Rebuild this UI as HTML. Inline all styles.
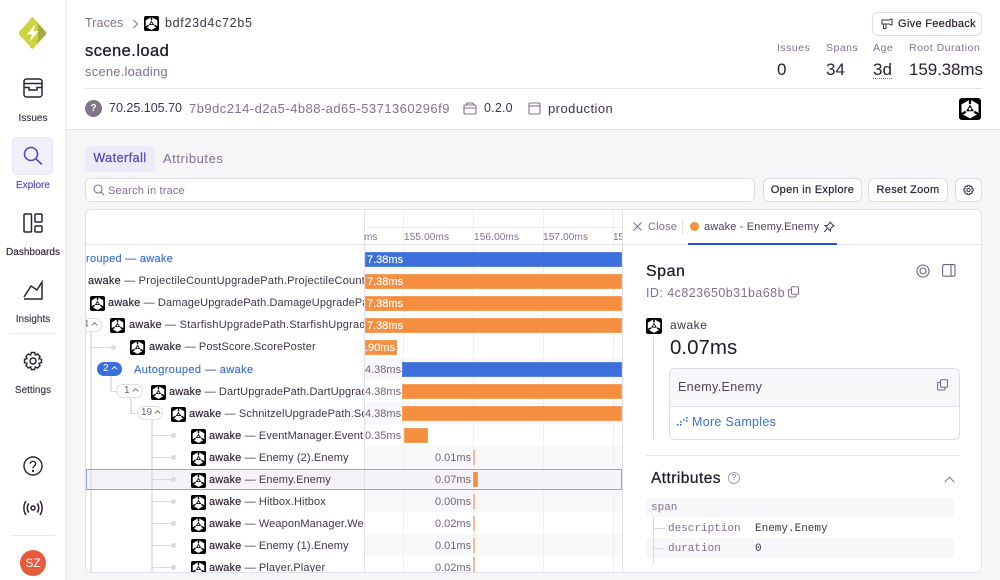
<!DOCTYPE html>
<html><head><meta charset="utf-8"><style>
*{box-sizing:border-box}
html,body{margin:0;padding:0}
body{width:1000px;height:580px;overflow:hidden;position:relative;background:#fff;font-family:"Liberation Sans",sans-serif;color:#2b2233}
.a{position:absolute;white-space:nowrap}
.g{color:#80708f}
.nav{position:absolute;left:0;width:66px;text-align:center;font-size:10px;color:#3e3446;-webkit-text-stroke:.15px}
.btn{position:absolute;background:#fff;border:1px solid #e0dce5;border-radius:6px;font-size:11px;color:#2b2233;text-align:center;letter-spacing:.3px;line-height:22px;-webkit-text-stroke:.2px}
.bar{position:absolute;height:15px;color:#fff;font-size:11px;line-height:16px;padding-left:2px;overflow:hidden;-webkit-text-stroke:.15px;box-shadow:inset 0 0 0 1px rgba(255,255,255,.14)}
.o{background:#f58f3f}.b{background:#3a6fdc}
.t{position:absolute;font-size:11px;color:#6f6379;white-space:nowrap;margin-top:2px}
.row{position:absolute;left:86px;width:278px;height:22px;overflow:hidden}
.n{position:absolute;top:5px;font-size:11px;line-height:14px;white-space:nowrap;color:#3e3446;letter-spacing:.12px}
.n b{font-weight:normal;color:#2b2233;-webkit-text-stroke:.15px}
.u{position:absolute;width:15px;height:15px;margin-top:1px}
.s{position:absolute;left:365px;width:257px;height:22px;background:#f8f7fa}
.tick{position:absolute;width:2px;height:15px;background:#f9b98a;margin-left:-.5px}
.hl{position:absolute;background:#dcd9e3}
.v{position:absolute;width:2px;background:#e4e2ea}
.dot{position:absolute;width:5px;height:5px;border-radius:50%;background:#dcd9e3}
.pill{position:absolute;height:14px;border:1px solid #e0dce5;border-radius:7px;background:#fff;font-size:10px;line-height:12px;color:#6f6379;padding-left:5px;white-space:nowrap}
.pill svg{margin-left:2px;vertical-align:1px}
.lab{position:absolute;font-size:10.5px;color:#80708f;letter-spacing:.5px;white-space:nowrap}
.val{position:absolute;font-size:17px;color:#2b2233;white-space:nowrap}
.m{font-family:"Liberation Mono",monospace;font-size:11px;position:absolute;white-space:nowrap}
</style></head><body>
<svg width="0" height="0" style="position:absolute"><defs>
<symbol id="un" viewBox="0 0 15 15"><rect width="15" height="15" rx="2" fill="#000"/><path d="M7.5 1.4L13 4.5V10.5L7.5 13.6L2 10.5V4.5Z" fill="#fff" stroke="#fff" stroke-linejoin="round" stroke-width=".6"/><path d="M7.5 1V4.2M1.8 11L4.6 9.3M13.2 11L10.4 9.3" stroke="#000" stroke-width="1.5"/><path d="M7.5 4.6L10.2 9H4.8Z" fill="#000"/><circle cx="7.5" cy="7.5" r=".9" fill="#fff"/></symbol>
<symbol id="ch" viewBox="0 0 7 4"><path d="M.7 3.4L3.5.8L6.3 3.4" fill="none" stroke="currentColor" stroke-width=".9"/></symbol>
</defs></svg>

<!-- sidebar -->
<div class="a" style="left:0;top:0;width:67px;height:580px;border-right:2px solid #eeedf3;background:#fff"></div>
<svg class="a" style="left:18px;top:16px" width="29" height="34" viewBox="0 0 29 34"><path d="M14.5 1L27.5 15.5C28.2 16.5 28.2 18 27.5 19L14.5 33C9 30 14 25 14 17S9 5 14.5 1Z" fill="#a3ad3f"/><path d="M14.5 1L1.5 15.5C.8 16.5 .8 18 1.5 19L14.5 33C21 27 20 23 20 17S21 6 14.5 1Z" fill="#cdd43e"/><path d="M17.5 8L9 18.5H14L11.5 26L20.5 15H15.5Z" fill="#fff"/></svg>
<svg class="a" style="left:23px;top:78px" width="20" height="20" viewBox="0 0 20 20" fill="none" stroke="#2b2233" stroke-width="1.5"><rect x="1" y="1" width="18" height="18" rx="2.5"/><path d="M1 5.5H19M1 9.5H6V12H14V9.5H19"/></svg>
<div class="nav" style="top:113px">Issues</div>
<div class="a" style="left:12px;top:137px;width:41px;height:38px;border-radius:6px;background:#f1effa;border:1px solid #e8e5f5"></div>
<svg class="a" style="left:23px;top:146px" width="20" height="20" viewBox="0 0 20 20" fill="none" stroke="#5a46c4" stroke-width="1.6"><circle cx="8" cy="8" r="6.5"/><path d="M13 13L19 18.5"/></svg>
<div class="nav" style="top:180px;color:#5a46c4">Explore</div>
<svg class="a" style="left:23px;top:213px" width="20" height="20" viewBox="0 0 20 20" fill="none" stroke="#2b2233" stroke-width="1.5"><rect x="1" y="1" width="7.5" height="18" rx="1"/><rect x="12" y="1" width="7" height="8" rx="1"/><rect x="12" y="13" width="7" height="6" rx="1"/></svg>
<div class="nav" style="top:247px;color:#2b2233">Dashboards</div>
<svg class="a" style="left:23px;top:280px" width="20" height="20" viewBox="0 0 20 20" fill="none" stroke="#2b2233" stroke-width="1.5"><path d="M1 19H19V2L14 10L8 6L1 17"/></svg>
<div class="nav" style="top:314px">Insights</div>
<div class="a" style="left:10px;top:333px;width:45px;height:1px;background:#eceaf0"></div>
<svg class="a" style="left:23px;top:351px" width="20" height="20" viewBox="0 0 20 20" fill="none" stroke="#2b2233" stroke-width="1.4"><circle cx="10" cy="10" r="3"/><path d="M8.3 1.5H11.7L12.3 4L14.6 3L17 5.4L16 7.7L18.5 8.3V11.7L16 12.3L17 14.6L14.6 17L12.3 16L11.7 18.5H8.3L7.7 16L5.4 17L3 14.6L4 12.3L1.5 11.7V8.3L4 7.7L3 5.4L5.4 3L7.7 4Z"/></svg>
<div class="nav" style="top:385px">Settings</div>
<svg class="a" style="left:23px;top:456px" width="20" height="20" viewBox="0 0 20 20" fill="none" stroke="#2b2233" stroke-width="1.4"><circle cx="10" cy="10" r="9"/><path d="M7.3 7.8C7.3 4.5 12.7 4.5 12.7 7.8C12.7 10 10 10 10 12.3"/><circle cx="10" cy="15" r=".5" fill="#2b2233"/></svg>
<svg class="a" style="left:23px;top:499px" width="20" height="18" viewBox="0 0 20 18" fill="none" stroke="#2b2233" stroke-width="1.5"><circle cx="10" cy="9" r="2"/><path d="M5.8 4.5C3.8 7 3.8 11 5.8 13.5M14.2 4.5C16.2 7 16.2 11 14.2 13.5M3 2C.2 6 .2 12 3 16M17 2C19.8 6 19.8 12 17 16"/></svg>
<div class="a" style="left:10px;top:535px;width:45px;height:1px;background:#eceaf0"></div>
<div class="a" style="left:20px;top:550px;width:26px;height:26px;border-radius:50%;background:#e95a3c;color:#fff;font-size:12px;text-align:center;line-height:26px">SZ</div>

<!-- content bg -->
<div class="a" style="left:67px;top:129px;width:933px;height:451px;background:#f6f6f9;border-top:1px solid #e3e1e8"></div>

<!-- header -->
<div class="a g" style="left:85px;top:16px;font-size:12.5px;letter-spacing:.1px">Traces</div>
<svg class="a" style="left:132px;top:19px" width="7" height="10" viewBox="0 0 7 10" fill="none" stroke="#80708f" stroke-width="1"><path d="M1.5 1L5.5 5L1.5 9"/></svg>
<svg class="a" style="left:144px;top:16px" width="15" height="15"><use href="#un"/></svg>
<div class="a" style="left:165px;top:16px;font-size:12.5px;color:#3e3446;letter-spacing:.7px">bdf23d4c72b5</div>
<div class="a" style="left:85px;top:42px;font-size:16.5px;color:#1f1a26;letter-spacing:.45px;-webkit-text-stroke:.3px">scene.load</div>
<div class="a g" style="left:85px;top:64px;font-size:13px;letter-spacing:.2px">scene.loading</div>
<div class="a" style="left:85px;top:88px;width:897px;height:1px;background:#e3e1e8"></div>
<div class="a" style="left:85px;top:100px;width:17px;height:17px;border-radius:50%;background:#80788a;color:#fff;font-size:10px;font-weight:bold;text-align:center;line-height:17px">?</div>
<div class="a" style="left:109px;top:101px;font-size:12.5px;color:#3e3446">70.25.105.70</div>
<div class="a" style="left:189px;top:101px;font-size:13px;color:#80708f;letter-spacing:.46px">7b9dc214-d2a5-4b88-ad65-5371360296f9</div>
<svg class="a" style="left:463px;top:102px" width="14" height="13" viewBox="0 0 14 13" fill="none" stroke="#80708f" stroke-width="1.1"><rect x="1" y="3" width="12" height="9" rx="1"/><path d="M3 3L4 1H10L11 3M1 6H13"/></svg>
<div class="a" style="left:484px;top:101px;font-size:12.5px;color:#3e3446;letter-spacing:.2px">0.2.0</div>
<svg class="a" style="left:528px;top:102px" width="13" height="13" viewBox="0 0 13 13" fill="none" stroke="#80708f" stroke-width="1.1"><rect x="1" y="1" width="11" height="11" rx="1"/><path d="M1 4H12"/></svg>
<div class="a" style="left:548px;top:101px;font-size:13px;color:#3e3446;letter-spacing:.45px">production</div>
<svg class="a" style="left:959px;top:98px" width="22" height="22"><use href="#un"/></svg>

<div class="btn" style="left:872px;top:12px;width:110px;height:24px;padding-left:20px;line-height:23px">Give Feedback</div>
<svg class="a" style="left:881px;top:18px" width="12" height="12" viewBox="0 0 12 12" fill="none" stroke="#3e3446" stroke-width="1"><path d="M1 2H8L11 1V7L8 6H1ZM2.5 6V10.5H5V6"/></svg>
<div class="lab" style="left:777px;top:42px">Issues</div><div class="val" style="left:777px;top:60px">0</div>
<div class="lab" style="left:826px;top:42px">Spans</div><div class="val" style="left:826px;top:60px">34</div>
<div class="lab" style="left:873px;top:42px">Age</div><div class="val" style="left:873px;top:60px;border-bottom:1px dotted #80708f;line-height:16px;margin-top:2px">3d</div>
<div class="lab" style="left:909px;top:42px">Root Duration</div><div class="val" style="left:909px;top:60px;letter-spacing:-.1px">159.38ms</div>

<!-- tabs -->
<div class="a" style="left:85px;top:146px;width:70px;height:26px;border-radius:6px;background:#eceaf7;color:#5a46c4;font-size:12.5px;text-align:center;line-height:24px;letter-spacing:.5px;-webkit-text-stroke:.25px">Waterfall</div>
<div class="a g" style="left:163px;top:151px;font-size:13px;letter-spacing:.55px">Attributes</div>

<!-- search -->
<div class="a" style="left:85px;top:178px;width:670px;height:24px;background:#fff;border:1px solid #e0dce5;border-radius:6px"></div>
<svg class="a" style="left:93px;top:184px" width="12" height="12" viewBox="0 0 12 12" fill="none" stroke="#80708f" stroke-width="1.1"><circle cx="5" cy="5" r="4"/><path d="M8 8L11 11"/></svg>
<div class="a g" style="left:108px;top:185px;font-size:11px;letter-spacing:.2px">Search in trace</div>
<div class="btn" style="left:763px;top:178px;width:99px;height:24px">Open in Explore</div>
<div class="btn" style="left:868px;top:178px;width:80px;height:24px">Reset Zoom</div>
<div class="btn" style="left:955px;top:178px;width:27px;height:24px"></div>
<svg class="a" style="left:963px;top:184px" width="11" height="12" viewBox="0 0 20 20" fill="none" stroke="#3e3446" stroke-width="1.8"><circle cx="10" cy="10" r="3"/><path d="M8.3 1.5H11.7L12.3 4L14.6 3L17 5.4L16 7.7L18.5 8.3V11.7L16 12.3L17 14.6L14.6 17L12.3 16L11.7 18.5H8.3L7.7 16L5.4 17L3 14.6L4 12.3L1.5 11.7V8.3L4 7.7L3 5.4L5.4 3L7.7 4Z"/></svg>

<!-- main panel -->
<div class="a" style="left:85px;top:209px;width:897px;height:364px;background:#fff;border:1px solid #e3e1e8;border-radius:6px"></div>
<div class="a" style="left:86px;top:244px;width:537px;height:1px;background:#e3e1e8"></div>
<div class="a" style="left:365px;top:227px;width:258px;height:1px;background:#eeedf2"></div>

<!-- row shades -->
<div class="s" style="top:247px;background:#fbfafc"></div>
<div class="s" style="top:358px"></div>
<div class="s" style="top:402px"></div>
<div class="s" style="top:446px"></div>
<div class="s" style="top:468px"></div>
<div class="s" style="top:490px"></div>
<div class="s" style="top:534px"></div>

<!-- grid lines -->
<div class="a" style="left:403px;top:210px;width:1px;height:362px;background:#f0eff4"></div>
<div class="a" style="left:473px;top:210px;width:1px;height:362px;background:#f0eff4"></div>
<div class="a" style="left:543px;top:210px;width:1px;height:362px;background:#f0eff4"></div>
<div class="a" style="left:613px;top:210px;width:1px;height:362px;background:#f0eff4"></div>
<div class="a" style="left:364px;top:210px;width:1px;height:362px;background:#e3e1e8"></div>

<!-- ruler -->
<div class="t" style="left:364px;top:230px;font-size:10px;color:#80708f">ms</div>
<div class="t" style="left:404px;top:230px;font-size:10px;color:#80708f;letter-spacing:.15px">155.00ms</div>
<div class="t" style="left:474px;top:230px;font-size:10px;color:#80708f;letter-spacing:.15px">156.00ms</div>
<div class="t" style="left:543px;top:230px;font-size:10px;color:#80708f;letter-spacing:.15px">157.00ms</div>
<div class="t" style="left:613px;top:230px;font-size:10px;color:#80708f;width:9px;overflow:hidden">15</div>

<!-- tree lines -->
<div class="v" style="left:90px;top:332px;height:241px"></div>
<div class="v" style="left:151px;top:420px;height:153px"></div>
<div class="hl" style="left:91px;top:347px;width:22px;height:1px"></div><div class="dot" style="left:111px;top:345px"></div>
<div class="v" style="left:110px;top:376px;height:15px"></div><div class="hl" style="left:110px;top:391px;width:7px;height:1px"></div>
<div class="v" style="left:130px;top:398px;height:15px"></div><div class="hl" style="left:130px;top:413px;width:8px;height:1px"></div>
<div class="hl" style="left:152px;top:435px;width:20px;height:1px"></div><div class="dot" style="left:171px;top:433px"></div>
<div class="hl" style="left:152px;top:457px;width:20px;height:1px"></div><div class="dot" style="left:171px;top:455px"></div>
<div class="hl" style="left:152px;top:501px;width:20px;height:1px"></div><div class="dot" style="left:171px;top:499px"></div>
<div class="hl" style="left:152px;top:523px;width:20px;height:1px"></div><div class="dot" style="left:171px;top:521px"></div>
<div class="hl" style="left:152px;top:545px;width:20px;height:1px"></div><div class="dot" style="left:171px;top:543px"></div>
<div class="hl" style="left:152px;top:567px;width:20px;height:1px"></div><div class="dot" style="left:171px;top:565px"></div>

<!-- selected row -->
<div class="a" style="left:86px;top:469px;width:536px;height:21px;background:#f5f3f7;border:1px solid #8fa5e8"></div>
<div class="v" style="left:90px;top:470px;height:19px"></div>
<div class="v" style="left:151px;top:470px;height:19px"></div>
<div class="hl" style="left:152px;top:479px;width:20px;height:1px"></div><div class="dot" style="left:171px;top:477px"></div>
<div class="a" style="left:364px;top:470px;width:1px;height:19px;background:#e3e1e8"></div>

<!-- tree rows -->
<div class="row" style="top:247px"><div class="n" style="left:0;color:#3a6fdc;letter-spacing:.28px;-webkit-text-stroke:.15px">rouped — awake</div></div>
<div class="row" style="top:269px"><div class="n" style="left:2px;letter-spacing:.22px"><b>awake</b> — ProjectileCountUpgradePath.ProjectileCountUpgradePath</div></div>
<div class="row" style="top:291px"><svg class="u" style="left:4px;top:4px"><use href="#un"/></svg><div class="n" style="left:22px"><b>awake</b> — DamageUpgradePath.DamageUpgradePath</div></div>
<div class="row" style="top:313px"><div class="pill" style="left:-9px;top:5px;width:25px">4<svg width="7" height="4"><use href="#ch"/></svg></div><svg class="u" style="left:24px;top:4px"><use href="#un"/></svg><div class="n" style="left:43px;letter-spacing:.22px"><b>awake</b> — StarfishUpgradePath.StarfishUpgradePath</div></div>
<div class="row" style="top:335px"><svg class="u" style="left:44px;top:4px"><use href="#un"/></svg><div class="n" style="left:63px"><b>awake</b> — PostScore.ScorePoster</div></div>
<div class="pill" style="left:97px;top:362px;width:25px;background:#3a6fdc;border-color:#3a6fdc;color:#fff">2<svg width="7" height="4"><use href="#ch"/></svg></div>
<div class="row" style="top:358px"><div class="n" style="left:48px;color:#3a6fdc;letter-spacing:.4px;-webkit-text-stroke:.15px">Autogrouped — awake</div></div>
<div class="pill" style="left:116px;top:384px;width:27px;padding-left:7px">1<svg width="7" height="4"><use href="#ch"/></svg></div>
<div class="row" style="top:380px"><svg class="u" style="left:65px;top:4px"><use href="#un"/></svg><div class="n" style="left:83px"><b>awake</b> — DartUpgradePath.DartUpgrade</div></div>
<div class="pill" style="left:137px;top:406px;width:26px;padding-left:3px">19<svg width="7" height="4"><use href="#ch"/></svg></div>
<div class="row" style="top:402px"><svg class="u" style="left:85px;top:4px"><use href="#un"/></svg><div class="n" style="left:103px"><b>awake</b> — SchnitzelUpgradePath.Schnitzel</div></div>
<div class="row" style="top:424px"><svg class="u" style="left:105px;top:4px"><use href="#un"/></svg><div class="n" style="left:123px"><b>awake</b> — EventManager.EventManager</div></div>
<div class="row" style="top:446px"><svg class="u" style="left:105px;top:4px"><use href="#un"/></svg><div class="n" style="left:123px"><b>awake</b> — Enemy (2).Enemy</div></div>
<div class="row" style="top:468px"><svg class="u" style="left:105px;top:4px"><use href="#un"/></svg><div class="n" style="left:123px"><b>awake</b> — Enemy.Enemy</div></div>
<div class="row" style="top:490px"><svg class="u" style="left:105px;top:4px"><use href="#un"/></svg><div class="n" style="left:123px"><b>awake</b> — Hitbox.Hitbox</div></div>
<div class="row" style="top:512px"><svg class="u" style="left:105px;top:4px"><use href="#un"/></svg><div class="n" style="left:123px"><b>awake</b> — WeaponManager.WeaponManager</div></div>
<div class="row" style="top:534px"><svg class="u" style="left:105px;top:4px"><use href="#un"/></svg><div class="n" style="left:123px"><b>awake</b> — Enemy (1).Enemy</div></div>
<div class="row" style="top:556px;height:16px"><svg class="u" style="left:105px;top:4px"><use href="#un"/></svg><div class="n" style="left:123px"><b>awake</b> — Player.Player</div></div>

<!-- bars -->
<div class="bar b" style="left:365px;top:252px;width:257px">7.38ms</div>
<div class="bar o" style="left:365px;top:274px;width:257px">7.38ms</div>
<div class="bar o" style="left:365px;top:296px;width:257px">7.38ms</div>
<div class="bar o" style="left:365px;top:318px;width:257px">7.38ms</div>
<div class="bar o" style="left:365px;top:340px;width:32px;padding:0">.90ms</div>
<div class="t" style="left:365px;top:362px">4.38ms</div><div class="bar b" style="left:402px;top:362px;width:220px"></div>
<div class="t" style="left:365px;top:384px">4.38ms</div><div class="bar o" style="left:402px;top:384px;width:220px"></div>
<div class="t" style="left:365px;top:406px">4.38ms</div><div class="bar o" style="left:402px;top:406px;width:220px"></div>
<div class="t" style="left:365px;top:428px">0.35ms</div><div class="bar o" style="left:404px;top:428px;width:24px"></div>
<div class="t" style="left:435px;top:450px">0.01ms</div><div class="tick" style="left:473px;top:450px"></div>
<div class="t" style="left:435px;top:472px">0.07ms</div><div class="bar o" style="left:473px;top:472px;width:5px"></div>
<div class="t" style="left:435px;top:494px">0.00ms</div><div class="tick" style="left:473px;top:494px"></div>
<div class="t" style="left:435px;top:516px">0.02ms</div><div class="tick" style="left:473px;top:516px"></div>
<div class="t" style="left:435px;top:538px">0.01ms</div><div class="tick" style="left:473px;top:538px"></div>
<div class="t" style="left:435px;top:560px">0.02ms</div><div class="tick" style="left:473px;top:557px"></div>

<!-- right panel -->
<div class="a" style="left:622px;top:210px;width:359px;height:362px;background:#fff;border-left:1px solid #e3e1e8;border-radius:0 5px 5px 0"></div>
<div class="a" style="left:623px;top:244px;width:358px;height:1px;background:#e3e1e8"></div>
<svg class="a" style="left:633px;top:222px" width="9" height="9" viewBox="0 0 9 9" stroke="#80708f" stroke-width="1"><path d="M.5.5L8.5 8.5M8.5.5L.5 8.5"/></svg>
<div class="a g" style="left:648px;top:221px;font-size:11px;letter-spacing:.2px">Close</div>
<div class="a" style="left:682px;top:219px;width:1px;height:15px;background:#e3e1e8"></div>
<div class="a" style="left:690px;top:222px;width:9px;height:9px;border-radius:50%;background:#f58f3f"></div>
<div class="a" style="left:704px;top:221px;font-size:11px;color:#4d4158;letter-spacing:.15px">awake - Enemy.Enemy</div>
<svg class="a" style="left:823px;top:221px" width="12" height="12" viewBox="0 0 12 12" fill="none" stroke="#3e3446" stroke-width="1"><path d="M7 1L11 5L9.5 5.5L7.5 8L7.5 10L2 4.5L4 4.5L6.5 2.5ZM4.5 7.5L1 11"/></svg>
<div class="a" style="left:688px;top:243px;width:149px;height:2px;background:#2b50c8"></div>

<div class="a" style="left:646px;top:263px;font-size:16px;color:#1f1a26;letter-spacing:.5px;-webkit-text-stroke:.25px">Span</div>
<svg class="a" style="left:916px;top:264px" width="14" height="14" viewBox="0 0 14 14" fill="none" stroke="#6f6379" stroke-width="1.1"><circle cx="7" cy="7" r="6"/><circle cx="7" cy="7" r="3"/></svg>
<svg class="a" style="left:942px;top:264px" width="14" height="13" viewBox="0 0 14 13" fill="none" stroke="#6f6379" stroke-width="1.1"><rect x=".6" y=".6" width="12.4" height="11.6" rx="1.5"/><path d="M9 .6V12.2"/></svg>
<div class="a g" style="left:646px;top:286px;font-size:12.5px;letter-spacing:.45px">ID: 4c823650b31ba68b</div>
<svg class="a" style="left:788px;top:286px" width="11" height="12" viewBox="0 0 11 12" fill="none" stroke="#80708f" stroke-width="1"><rect x="3.5" y=".8" width="7" height="7.5" rx="1"/><path d="M3 3.5H1.5A1 1 0 0 0 .6 4.5V10A1 1 0 0 0 1.5 11H7A1 1 0 0 0 8 10V8.5"/></svg>
<svg class="a" style="left:646px;top:318px" width="16" height="16"><use href="#un"/></svg>
<div class="a" style="left:653px;top:337px;width:1px;height:102px;background:#dcd9e3"></div>
<div class="a" style="left:670px;top:318px;font-size:12px;color:#3e3446;letter-spacing:.55px">awake</div>
<div class="a" style="left:670px;top:336px;font-size:20.5px;color:#1f1a26">0.07ms</div>

<div class="a" style="left:669px;top:368px;width:291px;height:72px;border:1px solid #e0dce5;border-radius:6px;overflow:hidden;background:#fff"><div style="height:38px;background:#f7f6f9;border-bottom:1px solid #e3e1e8"></div></div>
<div class="a" style="left:678px;top:380px;font-size:12.5px;color:#4d4158;letter-spacing:.35px">Enemy.Enemy</div>
<svg class="a" style="left:937px;top:379px" width="11" height="12" viewBox="0 0 11 12" fill="none" stroke="#6f6379" stroke-width="1"><rect x="3.5" y=".8" width="7" height="7.5" rx="1"/><path d="M3 3.5H1.5A1 1 0 0 0 .6 4.5V10A1 1 0 0 0 1.5 11H7A1 1 0 0 0 8 10V8.5"/></svg>
<svg class="a" style="left:677px;top:416px" width="11" height="11" viewBox="0 0 11 11" fill="#3a6fdc"><rect x="0" y="8" width="1.6" height="1.6"/><rect x="3" y="5" width="1.6" height="1.6"/><rect x="3" y="8" width="1.6" height="1.6"/><rect x="6" y="3" width="1.6" height="1.6"/><rect x="9" y="1" width="1.6" height="1.6"/><rect x="9" y="4" width="1.6" height="1.6"/></svg>
<div class="a" style="left:692px;top:415px;font-size:12.5px;color:#3a6fdc;letter-spacing:.3px">More Samples</div>

<div class="a" style="left:646px;top:455px;width:314px;height:1px;background:#e3e1e8"></div>
<div class="a" style="left:651px;top:470px;font-size:15.5px;color:#1f1a26;letter-spacing:.45px;-webkit-text-stroke:.25px">Attributes</div>
<div class="a g" style="left:728px;top:472px;width:12px;height:12px;border:1px solid #a89fb3;border-radius:50%;font-size:8px;text-align:center;line-height:10px">?</div>
<svg class="a" style="left:944px;top:476px" width="11" height="7" viewBox="0 0 11 7" fill="none" stroke="#80708f" stroke-width="1"><path d="M.8 6L5.5 1.2L10.2 6"/></svg>
<div class="a" style="left:646px;top:498px;width:308px;height:19px;background:#f7f6f9;border-radius:3px"></div>
<div class="a" style="left:646px;top:538px;width:308px;height:20px;background:#f7f6f9;border-radius:3px"></div>
<div class="m" style="left:651px;top:502px;color:#80708f">span</div>
<div class="a" style="left:653px;top:517px;width:1px;height:46px;background:#dcd9e3"></div>
<div class="a" style="left:654px;top:528px;width:11px;height:1px;background:#dcd9e3"></div>
<div class="a" style="left:654px;top:548px;width:11px;height:1px;background:#dcd9e3"></div>
<div class="m" style="left:668px;top:523px;color:#80708f">description</div>
<div class="m" style="left:755px;top:523px;color:#3e3446">Enemy.Enemy</div>
<div class="m" style="left:668px;top:543px;color:#80708f">duration</div>
<div class="m" style="left:755px;top:543px;color:#3e3446">0</div>
</body></html>
